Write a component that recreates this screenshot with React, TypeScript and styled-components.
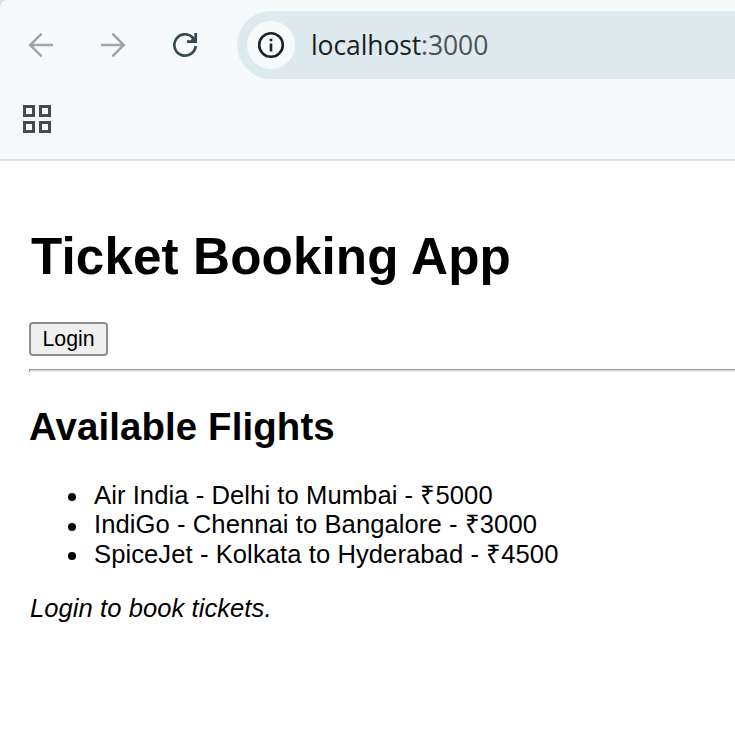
import React from "react";
import styled, { createGlobalStyle } from "styled-components";

const GlobalStyle = createGlobalStyle`
  body {
    margin: 0;
    background: #ffffff;
    overflow: hidden;
  }
`;

const Window = styled.div`
  height: 736px;
  display: flex;
  flex-direction: column;
  overflow: hidden;
  background: #ffffff;
  color: #000000;
  font-family: "Liberation Sans", Arial, sans-serif;
  font-size: 25.6px;
`;

const Chrome = styled.header`
  flex: none;
  background: #cfe4ea;
`;

const ChromeSurface = styled.div`
  box-sizing: border-box;
  height: 161px;
  padding-top: 11px;
  border-bottom: 2px solid #dde3e6;
  border-top-left-radius: 8px;
  background: #f6fafb;
`;

const Toolbar = styled.div`
  display: flex;
  align-items: center;
  height: 68px;
`;

const NavButtons = styled.nav`
  display: flex;
  gap: 40px;
  padding-left: 25px;
  width: 212px;
  box-sizing: border-box;
`;

const NavButton = styled.button<{ $muted?: boolean }>`
  display: flex;
  flex: none;
  width: 32px;
  height: 32px;
  padding: 0;
  border: 0;
  background: none;
  color: ${(p) => (p.$muted ? "#a0a6a7" : "#364a4f")};
`;

const AddressBar = styled.div`
  display: flex;
  flex: 1;
  align-items: center;
  box-sizing: border-box;
  height: 68px;
  margin-left: 25px;
  padding-left: 10px;
  border-radius: 34px 0 0 34px;
  background: #dfeaee;
`;

const SiteInfo = styled.span`
  display: flex;
  align-items: center;
  justify-content: center;
  width: 48px;
  height: 48px;
  border-radius: 50%;
  background: #f6fafb;
`;

const Url = styled.span`
  margin-left: 16px;
  color: #1b1f20;
  font-family: "Open Sans", "Noto Sans", sans-serif;
  font-size: 26.5px;
  line-height: 36px;
  letter-spacing: -0.1px;
  white-space: nowrap;
`;

const Port = styled.span`
  color: #4b5355;
`;

const BookmarksBar = styled.div`
  display: flex;
  padding: 26px 0 0 23px;
`;

const AppsGrid = styled.div`
  display: grid;
  grid-template-columns: 12px 12px;
  grid-auto-rows: 12px;
  gap: 4px;
`;

const AppsCell = styled.span`
  border: 3px solid #454a4b;
`;

const Page = styled.main`
  padding: 66px 0 0 30px;
`;

const Title = styled.h1`
  margin: 0;
  padding-left: 1px;
  font-size: 51.2px;
  line-height: 59px;
  letter-spacing: 0.12px;
`;

const LoginButton = styled.button`
  display: block;
  box-sizing: border-box;
  width: 79px;
  height: 34px;
  margin: 36px 0 0 -1px;
  padding: 0;
  border: 2px solid #8c8c8c;
  border-radius: 4px;
  background: #efefef;
  color: #000000;
  font: 21.33px/30px "Liberation Sans", Arial, sans-serif;
`;

const Divider = styled.hr`
  box-sizing: border-box;
  height: 3px;
  margin: 13px 0 0 -1px;
  border: 0;
  border-top: 1px solid #9a9a9a;
  border-left: 1px solid #9a9a9a;
  background: linear-gradient(#d5d5d5 50%, #eeeeee 50%);
`;

const SectionTitle = styled.h2`
  margin: 33px 0 0 -1px;
  font-size: 38.4px;
  line-height: 44px;
  letter-spacing: 0.13px;
`;

const FlightList = styled.ul`
  margin: 32px 0 0;
  padding-left: 38px;
  list-style: none;
  line-height: 29.4px;
  letter-spacing: 0.07px;
`;

const Flight = styled.li`
  display: flex;
  align-items: center;

  &::before {
    content: "";
    width: 8px;
    height: 8px;
    margin: 3px 18px 0 0;
    border-radius: 50%;
    background: #000000;
  }
`;

const Hint = styled.p`
  margin: 24px 0 0;
  font-style: italic;
  line-height: 30px;
  letter-spacing: 0.05px;
`;

const flights = [
  { airline: "Air India", from: "Delhi", to: "Mumbai", price: 5000 },
  { airline: "IndiGo", from: "Chennai", to: "Bangalore", price: 3000 },
  { airline: "SpiceJet", from: "Kolkata", to: "Hyderabad", price: 4500 },
];

const ArrowIcon = ({ forward = false }: { forward?: boolean }) => (
  <svg width="32" height="32" viewBox="0 0 32 32" fill="none" stroke="currentColor" strokeWidth="2.5">
    <path d={forward ? "M4 16H27M15.4 4.6L26.8 16L15.4 27.4" : "M28 16H5M16.6 4.6L5.2 16L16.6 27.4"} />
  </svg>
);

const ReloadIcon = () => (
  <svg width="32" height="32" viewBox="0 0 32 32" fill="none" stroke="currentColor" strokeWidth="2.7">
    <path d="M26.7 17A10.7 10.7 0 1 1 23.6 8.4L26 11" />
    <path d="M26.7 4V12.7H18" />
    <path d="M22.5 9L24.5 7.8L27 11V13H22Z" fill="currentColor" stroke="none" />
  </svg>
);

const InfoIcon = () => (
  <svg width="28" height="28" viewBox="0 0 28 28" fill="none" stroke="#1c2021" strokeWidth="2.6">
    <circle cx="14" cy="14" r="11.8" />
    <path d="M14 12.5V20.5M14 7.7V10.2" />
  </svg>
);

export default function App() {
  return (
    <Window>
      <GlobalStyle />
      <Chrome>
        <ChromeSurface>
          <Toolbar>
            <NavButtons>
              <NavButton $muted aria-label="Back"><ArrowIcon /></NavButton>
              <NavButton $muted aria-label="Forward"><ArrowIcon forward /></NavButton>
              <NavButton aria-label="Reload"><ReloadIcon /></NavButton>
            </NavButtons>
            <AddressBar>
              <SiteInfo><InfoIcon /></SiteInfo>
              <Url>localhost<Port>:3000</Port></Url>
            </AddressBar>
          </Toolbar>
          <BookmarksBar>
            <AppsGrid>
              <AppsCell /><AppsCell /><AppsCell /><AppsCell />
            </AppsGrid>
          </BookmarksBar>
        </ChromeSurface>
      </Chrome>
      <Page>
        <Title>Ticket Booking App</Title>
        <LoginButton>Login</LoginButton>
        <Divider />
        <SectionTitle>Available Flights</SectionTitle>
        <FlightList>
          {flights.map((f) => (
            <Flight key={f.airline}>{`${f.airline} - ${f.from} to ${f.to} - ₹${f.price}`}</Flight>
          ))}
        </FlightList>
        <Hint>Login to book tickets.</Hint>
      </Page>
    </Window>
  );
}
